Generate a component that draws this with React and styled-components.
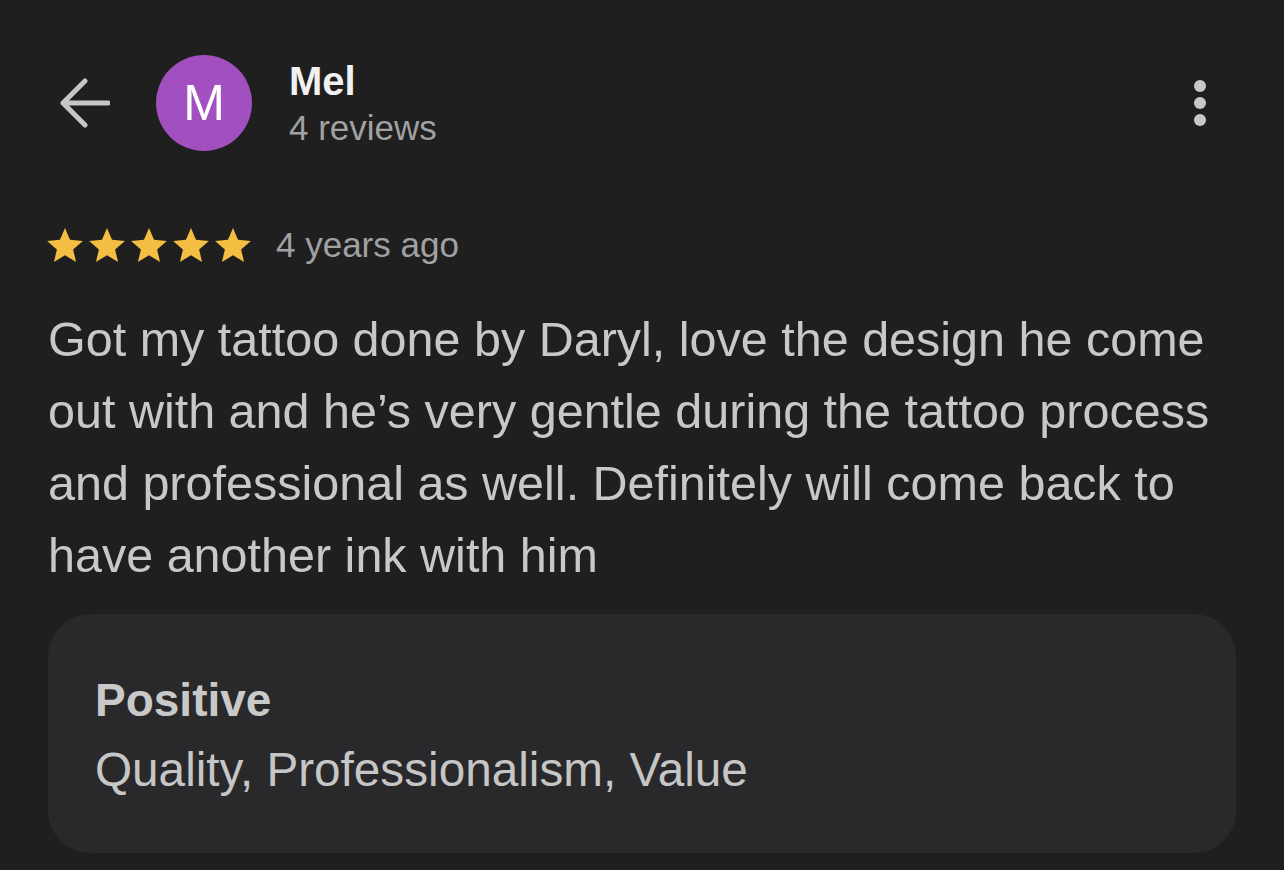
import styled, { createGlobalStyle } from "styled-components";

const GlobalStyle = createGlobalStyle`
  html, body {
    margin: 0;
    padding: 0;
    background: #1f1f1f;
  }
  body {
    font-family: "Liberation Sans", Arial, sans-serif;
    -webkit-font-smoothing: antialiased;
  }
`;

const Page = styled.div`
  width: 1284px;
  min-height: 870px;
  box-sizing: border-box;
  padding: 55px 48px 0 48px;
  background: #1f1f1f;
`;

const Header = styled.header`
  display: flex;
  align-items: center;
  height: 96px;
`;

const BackButton = styled.button`
  display: flex;
  align-items: center;
  justify-content: center;
  width: 52px;
  height: 52px;
  margin-left: 10px;
  padding: 0;
  background: none;
  border: none;
  cursor: pointer;
`;

const Avatar = styled.div`
  display: flex;
  align-items: center;
  justify-content: center;
  width: 96px;
  height: 96px;
  margin-left: 46px;
  border-radius: 50%;
  background: #a24fbf;
  color: #ffffff;
  font-size: 50px;
  line-height: 1;
`;

const Who = styled.div`
  display: flex;
  flex-direction: column;
  margin-left: 37px;
  margin-top: 4px;
`;

const Name = styled.div`
  font-size: 40px;
  font-weight: 700;
  line-height: 46px;
  color: #f1f1f1;
`;

const Meta = styled.div`
  font-size: 35px;
  line-height: ${(p) => p.$lh || 48}px;
  color: #a1a1a1;
`;

const MoreButton = styled.button`
  display: flex;
  flex-direction: column;
  align-items: center;
  gap: 5px;
  margin-left: auto;
  margin-right: 30px;
  margin-top: 0;
  padding: 0;
  background: none;
  border: none;
  cursor: pointer;
`;

const Dot = styled.span`
  display: block;
  width: 12px;
  height: 12px;
  border-radius: 50%;
  background: #c8c8c8;
`;

const RatingRow = styled.div`
  display: flex;
  align-items: center;
  margin-top: 76px;
`;

const Stars = styled.div`
  display: flex;
  gap: 6px;
  margin-left: -1px;
  margin-right: 25px;
`;

const Review = styled.p`
  margin: 40px 0 0 0;
  font-size: 48.5px;
  line-height: 72px;
  color: #c8c8c8;
`;

const Card = styled.section`
  margin-top: 23px;
  padding: 55px 47px 47px 47px;
  border-radius: 42px;
  background: #29292b;
`;

const CardTitle = styled.div`
  font-size: 46px;
  font-weight: 700;
  line-height: 62px;
  color: #c9c9c9;
`;

const CardText = styled.div`
  margin-top: 3px;
  font-size: 47.7px;
  line-height: 72px;
  color: #c6c6c6;
`;

function BackArrow() {
  return (
    <svg width="52" height="52" viewBox="0 0 52 52" fill="none">
      <path
        d="M50 26H5M27 4L5 26L27 48"
        stroke="#c6c6c6"
        strokeWidth="5"
        strokeLinecap="round"
        strokeLinejoin="round"
      />
    </svg>
  );
}

function Star() {
  return (
    <svg width="36" height="34" viewBox="2 2 20 19">
      <path
        d="M12 17.27L18.18 21l-1.64-7.03L22 9.24l-7.19-.61L12 2 9.19 8.63 2 9.24l5.46 4.73L5.82 21z"
        fill="#f3be41"
      />
    </svg>
  );
}

export default function App() {
  const rating = 5;
  return (
    <>
      <GlobalStyle />
      <Page>
        <Header>
          <BackButton title="back">
            <BackArrow />
          </BackButton>
          <Avatar>M</Avatar>
          <Who>
            <Name>Mel</Name>
            <Meta>4 reviews</Meta>
          </Who>
          <MoreButton title="more">
            <Dot />
            <Dot />
            <Dot />
          </MoreButton>
        </Header>

        <RatingRow>
          <Stars>
            {Array.from({ length: rating }).map((_, i) => (
              <Star key={i} />
            ))}
          </Stars>
          <Meta $lh={36}>4 years ago</Meta>
        </RatingRow>

        <Review>
          Got my tattoo done by Daryl, love the design he come out with and
          he’s very gentle during the tattoo process and professional as well.
          Definitely will come back to have another ink with him
        </Review>

        <Card>
          <CardTitle>Positive</CardTitle>
          <CardText>Quality, Professionalism, Value</CardText>
        </Card>
      </Page>
    </>
  );
}
